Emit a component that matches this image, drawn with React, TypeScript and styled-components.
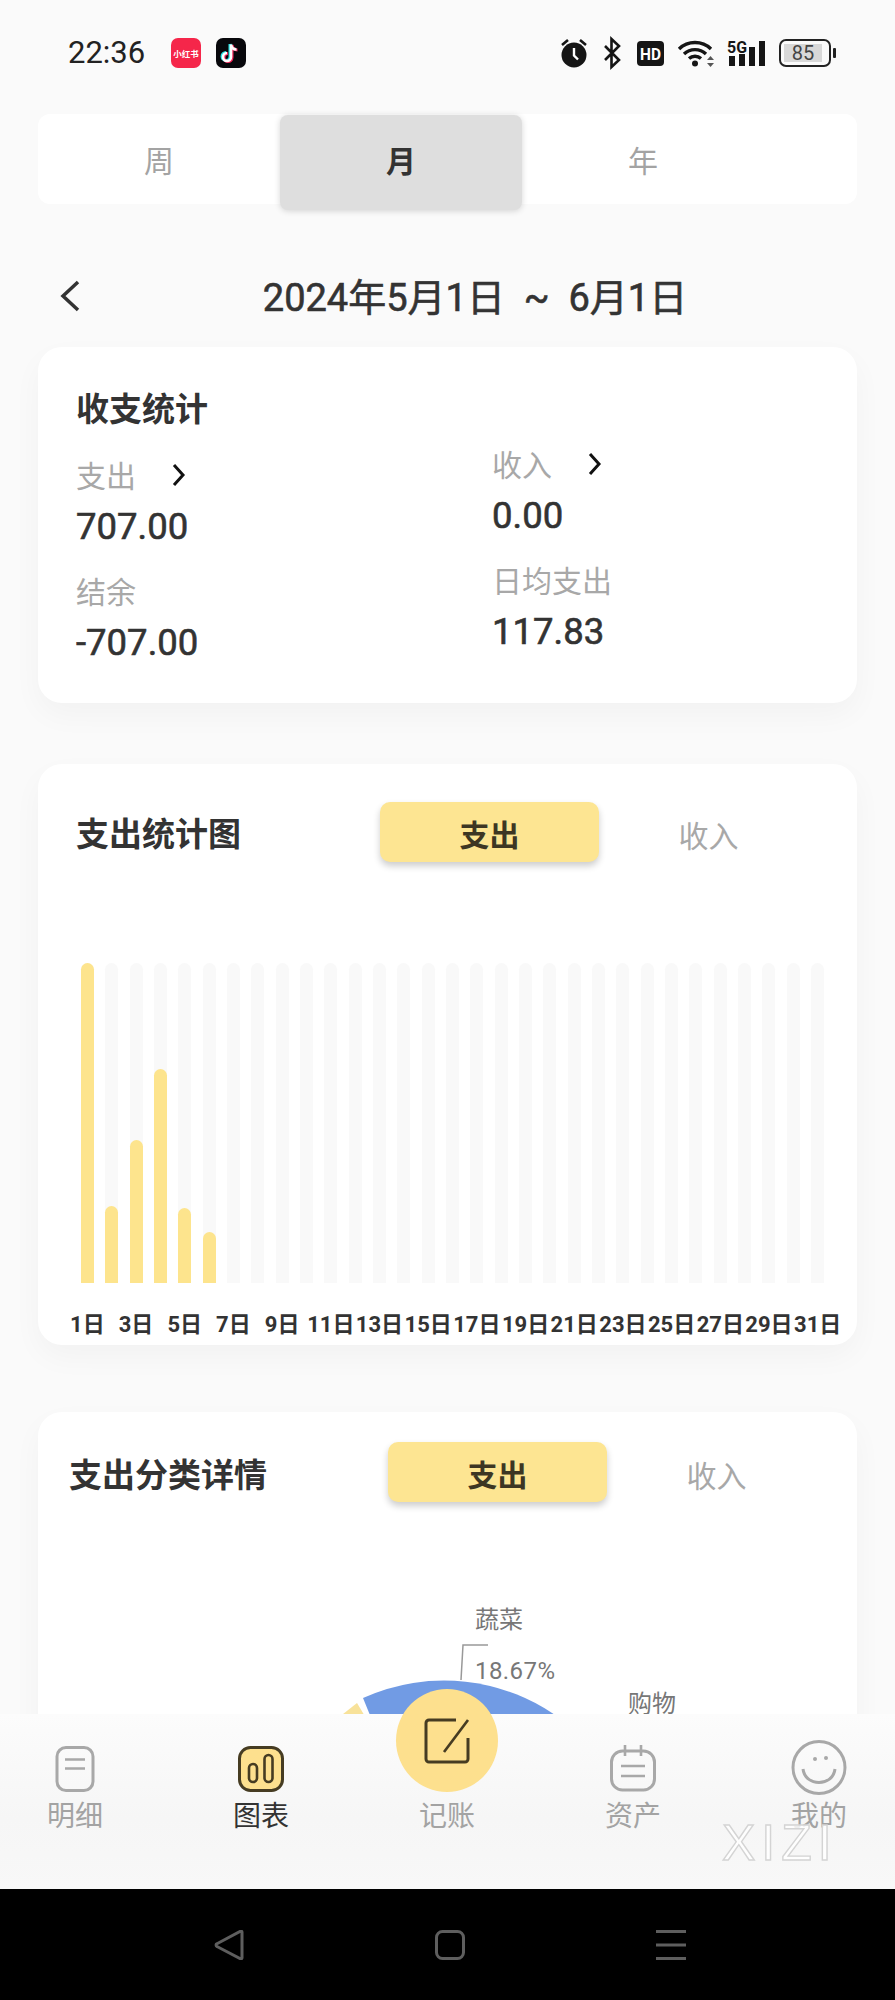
import React from "react";
import styled, { createGlobalStyle } from "styled-components";

const GlobalStyle = createGlobalStyle`
  html, body {
    margin: 0;
    padding: 0;
    background: #fafafa;
    font-family: Roboto, "Noto Sans CJK SC", sans-serif;
  }
`;

const Page = styled.div`
  width: 895px;
  height: 2000px;
  display: flex;
  flex-direction: column;
  overflow: hidden;
  background: #fafafa;
`;

const StatusBar = styled.div`
  height: 108px;
  flex: none;
  box-sizing: border-box;
  padding: 38px 58px 0 68px;
  display: flex;
  align-items: flex-start;
  justify-content: space-between;
`;

const StatusLeft = styled.div`
  display: flex;
  align-items: center;
  height: 30px;
`;

const StatusRight = styled.div`
  display: flex;
  align-items: center;
  height: 30px;
`;

const Clock = styled.span`
  width: 103px;
  font-size: 31px;
  color: #222;
  line-height: 30px;
`;

const RedBadge = styled.div`
  width: 30px;
  height: 30px;
  border-radius: 7px;
  background: #f5264a;
  color: #fff;
  font-size: 8.5px;
  font-weight: 700;
  white-space: nowrap;
  display: flex;
  align-items: center;
  justify-content: center;
  margin-right: 15px;
`;

const StatusIcon = styled.svg<{ $mr?: number }>`
  display: block;
  flex: none;
  overflow: visible;
  margin-right: ${(p) => p.$mr ?? 0}px;
`;

const Scroll = styled.main`
  flex: 1;
  min-height: 0;
  overflow: hidden;
  padding: 6px 38px 0;
`;

const Tabs = styled.div`
  height: 90px;
  background: #fff;
  border-radius: 12px;
  display: flex;
  align-items: flex-start;
`;

const Tab = styled.div<{ $active?: boolean }>`
  width: 242px;
  height: 95px;
  margin-top: 1px;
  box-sizing: border-box;
  padding-bottom: 7px;
  display: flex;
  align-items: center;
  justify-content: center;
  font-size: 30px;
  font-weight: ${(p) => (p.$active ? 700 : 400)};
  color: ${(p) => (p.$active ? "#333" : "#a3a3a3")};
  background: ${(p) => (p.$active ? "#dedede" : "transparent")};
  border-radius: 8px;
  box-shadow: ${(p) => (p.$active ? "0 1px 6px rgba(0,0,0,.16)" : "none")};
`;

const DateRow = styled.div`
  height: 60px;
  margin: 63px 0 20px;
  position: relative;
  box-sizing: border-box;
  padding: 0 0 5px 55px;
  display: flex;
  align-items: center;
  justify-content: center;
  font-size: 38px;
  font-weight: 400;
  -webkit-text-stroke: 0.6px #333;
  color: #333;
  white-space: pre;
`;

const BackIcon = styled.svg`
  position: absolute;
  left: 22px;
  top: 13px;
`;

const Card = styled.section<{ $height?: number; $mb?: number }>`
  background: #fff;
  border-radius: 24px;
  box-shadow: 0 12px 30px rgba(0, 0, 0, 0.035);
  height: ${(p) => (p.$height ? `${p.$height}px` : "auto")};
  margin-bottom: ${(p) => p.$mb ?? 0}px;
  box-sizing: border-box;
`;

const SummaryBody = styled.div`
  padding: 41px 0 0 38px;
`;

const CardTitle = styled.h2`
  margin: 0;
  font-size: 33px;
  line-height: 44px;
  font-weight: 700;
  color: #333;
  white-space: nowrap;
`;

const StatGrid = styled.div`
  margin-top: 14px;
  display: grid;
  grid-template-columns: 416px 1fr;
`;

const StatCol = styled.div<{ $offset?: number }>`
  padding-top: ${(p) => p.$offset ?? 0}px;
  display: flex;
  flex-direction: column;
  gap: 26px;
`;

const Stat = styled.div`
  display: flex;
  flex-direction: column;
  gap: 10px;
`;

const StatLabel = styled.div`
  height: 40px;
  line-height: 40px;
  font-size: 30px;
  color: #a8a8a8;
  display: flex;
  align-items: center;
  gap: 36px;
`;

const StatValue = styled.div`
  height: 40px;
  line-height: 40px;
  font-size: 36.5px;
  font-weight: 400;
  -webkit-text-stroke: 0.6px #333;
  color: #333;
`;

const ChevronIcon = styled.svg`
  display: block;
  margin-top: -5px;
`;

const CardHeader = styled.div<{ $left: number; $top: number; $titleWidth: number; $titleDrop: number }>`
  display: flex;
  align-items: center;
  padding: ${(p) => p.$top}px 0 0 ${(p) => p.$left}px;

  ${CardTitle} {
    width: ${(p) => p.$titleWidth}px;
    margin-top: ${(p) => p.$titleDrop}px;
  }
`;

const Toggle = styled.div<{ $active?: boolean }>`
  width: 219px;
  height: 60px;
  display: flex;
  align-items: center;
  justify-content: center;
  padding-top: ${(p) => (p.$active ? 2 : 4)}px;
  box-sizing: border-box;
  font-size: 30px;
  font-weight: ${(p) => (p.$active ? 700 : 400)};
  color: ${(p) => (p.$active ? "#3d3623" : "#a8a8a8")};
  background: ${(p) => (p.$active ? "#fde592" : "transparent")};
  border-radius: 10px;
  box-shadow: ${(p) => (p.$active ? "0 4px 7px rgba(0,0,0,.2)" : "none")};
`;

const Bars = styled.div`
  margin: 101px 33px 0 43px;
  height: 320px;
  display: flex;
  justify-content: space-between;
`;

const BarTrack = styled.div`
  width: 13px;
  height: 100%;
  background: #f9f9f9;
  border-radius: 7px 7px 0 0;
  display: flex;
  align-items: flex-end;
`;

const BarFill = styled.div`
  width: 100%;
  background: #fde48d;
  border-radius: 7px 7px 0 0;
`;

const DayLabels = styled.div`
  margin: 24px 0 0 25px;
  display: flex;
`;

const DayLabel = styled.span`
  flex: none;
  width: 48.7px;
  text-align: center;
  font-size: 22px;
  font-weight: 700;
  line-height: 36px;
  color: #333;
  white-space: nowrap;
`;

const PieChart = styled.svg`
  display: block;
  margin-top: 28px;
`;

const PieLabel = styled.text`
  font-size: 24px;
  fill: #777;
`;

const Nav = styled.nav`
  position: relative;
  z-index: 2;
  flex: none;
  height: 175px;
  box-sizing: border-box;
  padding-bottom: 54px;
  background: linear-gradient(#fcfcfc, #f6f6f6 60%, #f8f8f8);
  display: flex;
  align-items: flex-end;
`;

const NavGrid = styled.div`
  margin-left: -18px;
  flex: none;
  width: 930px;
  display: grid;
  grid-template-columns: repeat(5, 186px);
  align-items: end;
`;

const NavItem = styled.div`
  display: flex;
  flex-direction: column;
  align-items: center;
`;

const NavIcon = styled.svg<{ $mb?: number }>`
  display: block;
  margin-bottom: ${(p) => p.$mb ?? 0}px;
`;

const NavLabel = styled.span<{ $active?: boolean }>`
  margin-top: 7px;
  font-size: 28px;
  line-height: 36px;
  color: ${(p) => (p.$active ? "#333" : "#a3a3a3")};
`;

const AddCircle = styled.div`
  width: 102px;
  height: 103px;
  border-radius: 50%;
  background: #fde08e;
  display: flex;
  align-items: center;
  justify-content: center;
`;

const Watermark = styled.span`
  position: absolute;
  left: 722px;
  top: 104px;
  font-family: "Liberation Sans", sans-serif;
  font-size: 50px;
  line-height: 50px;
  letter-spacing: 6px;
  color: rgba(255, 255, 255, 0.8);
  -webkit-text-stroke: 1.4px #d4d4d4;
`;

const SystemBar = styled.div`
  flex: none;
  height: 111px;
  background: #000;
  display: flex;
  align-items: flex-start;
  padding: 41px 0 0 214px;
  box-sizing: border-box;
  gap: 191px;
`;

const dayTotals = [320, 77, 143, 214, 75, 51];
const days = Array.from({ length: 31 }, (_, i) => dayTotals[i] ?? 0);
const labels = days.map((_, i) => i + 1).filter((d) => d % 2 === 1);

const Chevron = () => (
  <ChevronIcon width="14" height="24" viewBox="0 0 14 24" fill="none" stroke="#111" strokeWidth="3">
    <path d="M2 2l9 10-9 10" />
  </ChevronIcon>
);

export default function App() {
  return (
    <Page>
      <GlobalStyle />
      <StatusBar>
        <StatusLeft>
          <Clock>22:36</Clock>
          <RedBadge>小红书</RedBadge>
          <StatusIcon width="30" height="30" viewBox="0 0 30 30" fill="none">
            <rect width="30" height="30" rx="7" fill="#08080c" />
            <path d="M15 6.5v12.5a4 4 0 1 1-4-4M15 6.5c.5 3 2.800 5 5.500 5" stroke="#25e4e6" strokeWidth="3" transform="translate(-1 -.6)" />
            <path d="M15 6.500v12.500a4 4 0 1 1-4-4M15 6.500c.5 3 2.800 5 5.500 5" stroke="#f6265a" strokeWidth="3" transform="translate(1 .6)" />
            <path d="M15 6.500v12.500a4 4 0 1 1-4-4M15 6.500c.5 3 2.800 5 5.500 5" stroke="#fff" strokeWidth="2.600" />
          </StatusIcon>
        </StatusLeft>
        <StatusRight>
          <StatusIcon width="28" height="30" viewBox="0 0 28 30" $mr={15} fill="none">
            <circle cx="14" cy="17" r="12.500" fill="#151515" />
            <path d="M14 10v7.500l4 4" stroke="#fff" strokeWidth="2.400" />
            <path d="M2 7l6-5M26 7l-6-5" stroke="#151515" strokeWidth="2.600" />
          </StatusIcon>
          <StatusIcon width="18" height="30" viewBox="0 0 18 30" $mr={16} fill="none" stroke="#151515" strokeWidth="2.600">
            <path d="M2 8l14 14-7.500 7V1L16 8 2 22" />
          </StatusIcon>
          <StatusIcon width="27" height="26" viewBox="0 0 27 26" $mr={14}>
            <rect width="27" height="25" y="1" rx="4" fill="#151515" />
            <text x="13.500" y="20" textAnchor="middle" fontSize="17" fontWeight="700" fill="#fff" textLength="21" lengthAdjust="spacingAndGlyphs">HD</text>
          </StatusIcon>
          <StatusIcon width="37" height="30" viewBox="0 0 37 30" $mr={12} fill="none">
            <path d="M1 11a23 23 0 0 1 32 0M6 16a16 16 0 0 1 22 0M11 20.500a9 9 0 0 1 12 0" stroke="#151515" strokeWidth="3.400" />
            <circle cx="17" cy="25.500" r="3" fill="#151515" />
            <path d="M29 22l3.500-4 3.500 4zM29 25l3.500 4 3.500-4z" fill="#555" />
          </StatusIcon>
          <StatusIcon width="39" height="28" viewBox="0 0 39 28" $mr={13}>
            <text x="0" y="14" fontSize="17" fontWeight="700" fill="#151515" textLength="20" lengthAdjust="spacingAndGlyphs">5G</text>
            <rect x="2" y="17" width="6" height="10" fill="#151515" />
            <rect x="12" y="15" width="6" height="12" fill="#151515" />
            <rect x="22" y="8" width="6" height="19" fill="#151515" />
            <rect x="32" y="2" width="6" height="25" fill="#151515" />
          </StatusIcon>
          <StatusIcon width="58" height="28" viewBox="0 0 58 28" fill="none">
            <rect x="1" y="1" width="50" height="26" rx="6" stroke="#222" strokeWidth="2" />
            <rect x="5" y="5" width="38" height="18" fill="#d8d8d8" />
            <text x="24" y="21" textAnchor="middle" fontSize="20" fill="#444">85</text>
            <rect x="54" y="9" width="3" height="10" rx="1" fill="#222" />
          </StatusIcon>
        </StatusRight>
      </StatusBar>

      <Scroll>
        <Tabs>
          <Tab>周</Tab>
          <Tab $active>月</Tab>
          <Tab>年</Tab>
        </Tabs>

        <DateRow>
          <BackIcon width="20" height="32" viewBox="0 0 20 32" fill="none" stroke="#333" strokeWidth="3.500">
            <path d="M18 2L3 16l15 14" />
          </BackIcon>
          {"2024年5月1日  ~  6月1日"}
        </DateRow>

        <Card $height={356} $mb={61}>
          <SummaryBody>
            <CardTitle>收支统计</CardTitle>
            <StatGrid>
              <StatCol $offset={11}>
                <Stat>
                  <StatLabel>支出<Chevron /></StatLabel>
                  <StatValue>707.00</StatValue>
                </Stat>
                <Stat>
                  <StatLabel>结余</StatLabel>
                  <StatValue>-707.00</StatValue>
                </Stat>
              </StatCol>
              <StatCol>
                <Stat>
                  <StatLabel>收入<Chevron /></StatLabel>
                  <StatValue>0.00</StatValue>
                </Stat>
                <Stat>
                  <StatLabel>日均支出</StatLabel>
                  <StatValue>117.83</StatValue>
                </Stat>
              </StatCol>
            </StatGrid>
          </SummaryBody>
        </Card>

        <Card $height={581} $mb={67}>
          <CardHeader $left={38} $top={38} $titleWidth={304} $titleDrop={6}>
            <CardTitle>支出统计图</CardTitle>
            <Toggle $active>支出</Toggle>
            <Toggle>收入</Toggle>
          </CardHeader>
          <Bars>
            {days.map((h, i) => (
              <BarTrack key={i}>
                {h > 0 && <BarFill style={{ height: h }} />}
              </BarTrack>
            ))}
          </Bars>
          <DayLabels>
            {labels.map((d) => (
              <DayLabel key={d}>{d}日</DayLabel>
            ))}
          </DayLabels>
        </Card>

        <Card $height={520}>
          <CardHeader $left={31} $top={30} $titleWidth={319} $titleDrop={8}>
            <CardTitle>支出分类详情</CardTitle>
            <Toggle $active>支出</Toggle>
            <Toggle>收入</Toggle>
          </CardHeader>
          <PieChart width="819" height="360" viewBox="38 1530 819 360" fill="none">
            <path d="M372 1720L363 1698A196 196 0 0 1 562 1720Z" fill="#719be4" />
            <path d="M338 1718L357 1703L366 1718Z" fill="#f8e29a" />
            <path d="M461 1680L463 1645H488" stroke="#999" strokeWidth="1.500" />
            <PieLabel x="475" y="1628">蔬菜</PieLabel>
            <PieLabel x="475" y="1679" textLength="80" lengthAdjust="spacing">18.67%</PieLabel>
            <PieLabel x="628" y="1712">购物</PieLabel>
          </PieChart>
        </Card>
      </Scroll>

      <Nav>
        <NavGrid>
          <NavItem>
            <NavIcon width="40" height="46" viewBox="0 0 40 46" fill="none" stroke="#a8a8a8" strokeWidth="3">
              <rect x="2" y="1.500" width="36" height="43" rx="9" />
              <path d="M10 13.500h20M10 22.500h20" strokeWidth="2.600" />
            </NavIcon>
            <NavLabel>明细</NavLabel>
          </NavItem>
          <NavItem>
            <NavIcon width="46" height="46" viewBox="0 0 46 46" fill="none" stroke="#463c22" strokeWidth="3">
              <rect x="1.500" y="1.500" width="43" height="43" rx="11" fill="#fde08e" />
              <rect x="11" y="18" width="8" height="18" rx="4" strokeWidth="2.600" />
              <rect x="26.500" y="9" width="8" height="27" rx="4" strokeWidth="2.600" />
            </NavIcon>
            <NavLabel $active>图表</NavLabel>
          </NavItem>
          <NavItem>
            <AddCircle>
              <svg width="46" height="46" viewBox="0 0 46 46" fill="none" stroke="#463c22" strokeWidth="3">
                <path d="M32 2H5a3 3 0 0 0-3 3v36a3 3 0 0 0 3 3h36a3 3 0 0 0 3-3V20" />
                <path d="M44 2L20 34" strokeWidth="2.600" />
              </svg>
            </AddCircle>
            <NavLabel>记账</NavLabel>
          </NavItem>
          <NavItem>
            <NavIcon width="46" height="47" viewBox="0 0 46 47" fill="none" stroke="#a8a8a8" strokeWidth="3">
              <rect x="1.500" y="6" width="43" height="39" rx="11" />
              <path d="M15 0v11M31 0v11" strokeWidth="2.600" />
              <path d="M11 21h24M11 31h24" strokeWidth="2.600" />
            </NavIcon>
            <NavLabel>资产</NavLabel>
          </NavItem>
          <NavItem>
            <NavIcon width="56" height="55" viewBox="0 0 56 55" $mb={-3} fill="none" stroke="#a8a8a8" strokeWidth="3">
              <circle cx="28" cy="27.500" r="26" />
              <path d="M12 29c2 18 30 18 32 0" />
              <circle cx="24" cy="19" r="2" fill="#a8a8a8" stroke="none" />
              <circle cx="35" cy="18" r="2" fill="#a8a8a8" stroke="none" />
            </NavIcon>
            <NavLabel>我的</NavLabel>
          </NavItem>
        </NavGrid>
        <Watermark>XIZI</Watermark>
      </Nav>

      <SystemBar>
        <svg width="30" height="30" viewBox="0 0 30 30" fill="none" stroke="#5e5e5e" strokeWidth="3">
          <path d="M28 2v26a1 1 0 0 1-1.500 .8L3 16.500a1.500 1.500 0 0 1 0-2.800L26.500 1.200A1 1 0 0 1 28 2z" />
        </svg>
        <svg width="30" height="30" viewBox="0 0 30 30" fill="none" stroke="#5e5e5e" strokeWidth="3">
          <rect x="1.500" y="1.500" width="27" height="27" rx="6" />
        </svg>
        <svg width="30" height="30" viewBox="0 0 30 30" fill="none" stroke="#5e5e5e" strokeWidth="3">
          <path d="M0 1.500h30M0 15h30M0 28.500h30" />
        </svg>
      </SystemBar>
    </Page>
  );
}
